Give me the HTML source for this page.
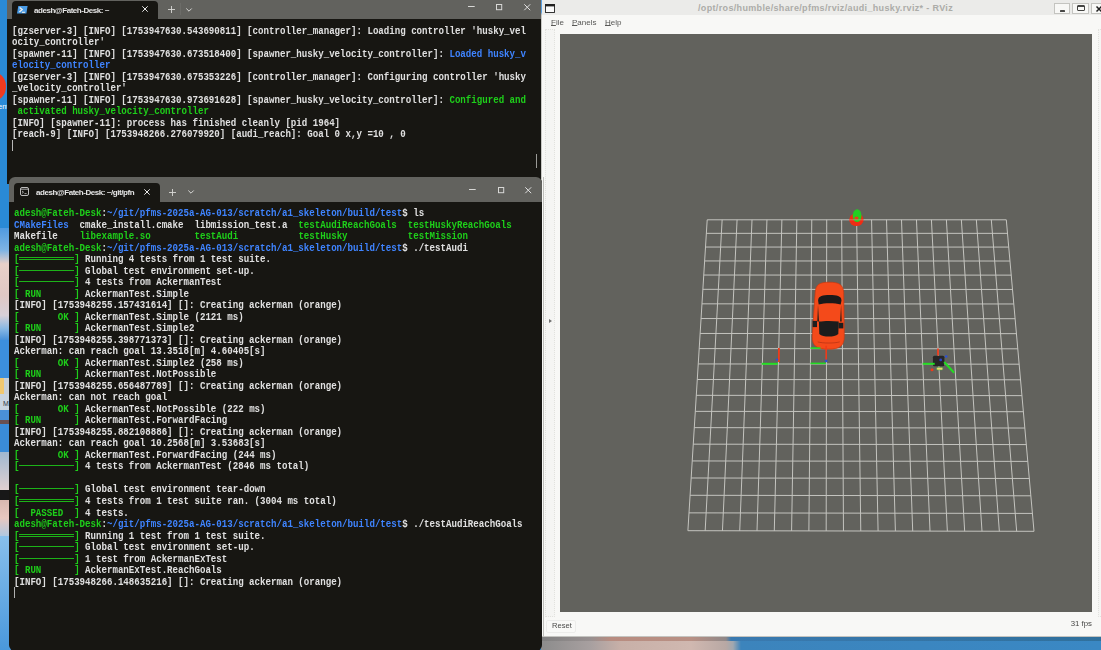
<!DOCTYPE html>
<html><head><meta charset="utf-8">
<style>
*{margin:0;padding:0;box-sizing:border-box}
html,body{width:1101px;height:650px;overflow:hidden;background:#2a8ad6;position:relative;font-family:"Liberation Sans",sans-serif}
.abs{position:absolute}
.tl{position:absolute;white-space:pre;font-weight:bold;font-family:"Liberation Mono",monospace;font-size:9.13px;letter-spacing:-0.008px;line-height:11.52px;color:#e0e0e0;height:11.52px;transform:scaleY(1.17);transform-origin:0 8.2px;will-change:transform}
.term{position:absolute;background:#171612;overflow:hidden}
.tabbar{position:absolute;left:0;top:0;right:0;background:#62625e}
.tab{position:absolute;background:#171612;border-radius:4px 4px 0 0}
.ttl{position:absolute;color:#e6e6e6;font-size:8px;font-weight:bold;letter-spacing:-0.45px;line-height:10px;white-space:pre;will-change:transform}
svg.ic{position:absolute;overflow:visible}
.dl,.el{display:inline-block;width:54.7px;height:11.52px;vertical-align:top;margin-right:-0.008px}
.dl{background:linear-gradient(to bottom,transparent 4.55px,rgba(30,207,26,.85) 4.55px,rgba(30,207,26,.85) 5.5px,transparent 5.5px)}
.el{background:linear-gradient(to bottom,transparent 3.6px,rgba(30,207,26,.85) 3.6px,rgba(30,207,26,.85) 4.5px,transparent 4.5px,transparent 5.4px,rgba(30,207,26,.85) 5.4px,rgba(30,207,26,.85) 6.3px,transparent 6.3px)}
.menu{position:absolute;top:16.5px;font-size:8px;line-height:12px;color:#585856;will-change:transform}
.menu u{text-decoration-thickness:0.8px;text-underline-offset:0.2px}
</style></head><body>
<!-- desktop left strip -->
<div class="abs" style="left:0;top:0;width:12px;height:650px;background:#2a8ad6"></div>
<div class="abs" style="left:0;top:228px;width:12px;height:112px;background:linear-gradient(#4f9ae0 0%,#7fb4e4 20%,#e8d0c8 32%,#e0c8c4 60%,#d8d0d8 78%,#88b8e4 90%,#4890d8 100%)"></div>
<div class="abs" style="left:0;top:340px;width:12px;height:38px;background:#3c8fdc"></div>
<div class="abs" style="left:0;top:378px;width:4px;height:16px;background:#f0c870"></div>
<div class="abs" style="left:4px;top:378px;width:8px;height:16px;background:#c8d0d8"></div>
<div class="abs" style="left:0;top:394px;width:12px;height:16px;background:#c8d4e0"></div>
<div class="abs" style="left:3px;top:400px;font-size:7px;line-height:8px;color:#303848">M</div>
<div class="abs" style="left:0;top:410px;width:12px;height:10px;background:#4a90d8"></div>
<div class="abs" style="left:0;top:420px;width:12px;height:4px;background:#6a5050"></div>
<div class="abs" style="left:0;top:424px;width:12px;height:28px;background:#3a8cd8"></div>
<div class="abs" style="left:0;top:452px;width:12px;height:38px;background:linear-gradient(#a0b8d0,#e0d0d0)"></div>
<div class="abs" style="left:0;top:490px;width:12px;height:10px;background:#181818"></div>
<div class="abs" style="left:0;top:500px;width:12px;height:36px;background:linear-gradient(#d8b8b0,#e8c8c0 50%,#b0c8e0)"></div>
<div class="abs" style="left:0;top:536px;width:12px;height:114px;background:linear-gradient(#88c0ec,#4a98dc)"></div>
<div class="abs" style="left:-15px;top:73px;width:21px;height:26.5px;border-radius:50%;background:#f03a20"></div>
<div class="abs" style="left:-2px;top:103px;font-size:7.5px;line-height:8px;color:#ffffff;white-space:pre">ent</div>

<!-- desktop bottom strip -->
<div class="abs" style="left:541px;top:636px;width:560px;height:14px;background:linear-gradient(90deg,#8c8c8c 0px,#a8a0a0 50px,#c8b0a8 80px,#d0b8b0 150px,#b8a8a4 185px,#a0a8b0 192px,#3c84bc 200px,#3a88c4 560px)"></div>
<div class="abs" style="left:541px;top:637px;width:560px;height:4px;background:linear-gradient(90deg,#808080 0px,#989090 50px,#b88c80 70px,#b89084 150px,#908888 185px,#3a7ab0 190px,#30709c 560px)"></div>

<!-- TERMINAL 1 -->
<div class="term" style="left:7.2px;top:0;width:533.7px;height:184px">
  <div class="tabbar" style="height:18.7px"></div>
  <div class="tab" style="left:5.3px;top:1px;width:145.2px;height:17.7px"></div>
</div>
<svg class="ic" style="left:17.3px;top:5.8px" width="11" height="8" viewBox="0 0 11 8">
  <path d="M1.3 0 H10.6 L9.4 7.5 H0 Z" fill="#4a9ce6"/>
  <path d="M2.6 1.5 L5.2 3.6 L2.4 6.1" stroke="#f4f0e8" stroke-width="1.3" fill="none"/>
  <path d="M5 6.3 H7.9" stroke="#f4f0e8" stroke-width="1.1"/>
</svg>
<div class="ttl" style="left:33.6px;top:5.5px">adesh@Fateh-Desk: ~</div>
<svg class="ic" style="left:142px;top:6.4px" width="6" height="6"><path d="M0.3 0.3 L5.7 5.7 M5.7 0.3 L0.3 5.7" stroke="#e8e8e8" stroke-width="1"/></svg>
<svg class="ic" style="left:167.6px;top:6px" width="7" height="7"><path d="M3.5 0 V7 M0 3.5 H7" stroke="#d8d8d6" stroke-width="0.9"/></svg>
<div class="abs" style="left:180.2px;top:3px;width:1px;height:12px;background:#6c6c68"></div>
<svg class="ic" style="left:186px;top:7.6px" width="6" height="4"><path d="M0.3 0.5 L3 3.2 L5.7 0.5" stroke="#d8d8d6" stroke-width="1" fill="none"/></svg>
<svg class="ic" style="left:467.5px;top:6.4px" width="7" height="2"><path d="M0 0.5 H6.7" stroke="#d8d8d6" stroke-width="1"/></svg>
<svg class="ic" style="left:496px;top:4.4px" width="6.2" height="6"><rect x="0.5" y="0.5" width="5.2" height="5.2" stroke="#d8d8d6" stroke-width="1" fill="none"/></svg>
<svg class="ic" style="left:523.6px;top:4px" width="6.5" height="6.5"><path d="M0.3 0.3 L6.2 6.2 M6.2 0.3 L0.3 6.2" stroke="#e0e0e0" stroke-width="1"/></svg>
<div class="abs" style="left:536.3px;top:153.5px;width:1.2px;height:14px;background:#9a9a96"></div>
<div class="abs" style="left:11.9px;top:140px;width:1.1px;height:11.4px;background:#b8b8b8"></div>
<div class="tl" style="left:11.90px;top:25.70px">[gzserver-3] [INFO] [1753947630.543690811] [controller_manager]: Loading controller &#x27;husky_vel</div>
<div class="tl" style="left:11.90px;top:37.22px">ocity_controller&#x27;</div>
<div class="tl" style="left:11.90px;top:48.74px">[spawner-11] [INFO] [1753947630.673518400] [spawner_husky_velocity_controller]: <span style="color:#3f84ff">Loaded husky_v</span></div>
<div class="tl" style="left:11.90px;top:60.26px"><span style="color:#3f84ff">elocity_controller</span></div>
<div class="tl" style="left:11.90px;top:71.78px">[gzserver-3] [INFO] [1753947630.675353226] [controller_manager]: Configuring controller &#x27;husky</div>
<div class="tl" style="left:11.90px;top:83.30px">_velocity_controller&#x27;</div>
<div class="tl" style="left:11.90px;top:94.82px">[spawner-11] [INFO] [1753947630.973691628] [spawner_husky_velocity_controller]: <span style="color:#1ecf1a">Configured and</span></div>
<div class="tl" style="left:11.90px;top:106.34px"><span style="color:#1ecf1a"> activated husky_velocity_controller</span></div>
<div class="tl" style="left:11.90px;top:117.86px">[INFO] [spawner-11]: process has finished cleanly [pid 1964]</div>
<div class="tl" style="left:11.90px;top:129.38px">[reach-9] [INFO] [1753948266.276079920] [audi_reach]: Goal 0 x,y =10 , 0</div>

<!-- RVIZ -->
<div class="abs" style="left:541px;top:0;width:560px;height:637px;background:#f8f8f6;border-bottom:1.5px solid #c4c4c0">
  <div class="abs" style="left:0;top:0;width:560px;height:15.3px;background:#ebebe9"></div>
</div>
<svg class="ic" style="left:545px;top:4px" width="10" height="9" viewBox="0 0 10 9">
  <rect x="0.5" y="0.5" width="9" height="8" stroke="#202020" stroke-width="0.9" fill="#fafafa"/>
  <rect x="0" y="0" width="10" height="2.4" fill="#202020"/>
</svg>
<div class="abs" style="left:541px;top:2px;width:560px;text-align:center;font-size:9px;line-height:12px;font-weight:bold;letter-spacing:0.345px;color:#acaca8;white-space:pre"><span style="position:relative;left:4.5px">/opt/ros/humble/share/pfms/rviz/audi_husky.rviz* - RViz</span></div>
<div class="abs" style="left:1054.2px;top:3.3px;width:16px;height:10.3px;border:1px solid #c4c4c0;background:#f8f8f6"></div>
<div class="abs" style="left:1059.8px;top:9.9px;width:5px;height:1.8px;border-radius:0.6px;background:#484846"></div>
<div class="abs" style="left:1072.2px;top:3.3px;width:16.5px;height:10.3px;border:1px solid #c4c4c0;background:#f8f8f6"></div>
<div class="abs" style="left:1076.5px;top:5.1px;width:8px;height:6.4px;border:1px solid #444442;border-radius:1px;box-shadow:inset 0 1px 0 #444442"></div>
<div class="abs" style="left:1090.6px;top:3.3px;width:14px;height:10.3px;border:1px solid #c4c4c0;background:#f8f8f6"></div>
<svg class="ic" style="left:1096px;top:6px" width="6" height="6"><path d="M0.5 0.5 L5.5 5.5 M5.5 0.5 L0.5 5.5" stroke="#202020" stroke-width="1.5"/></svg>

<div class="menu" style="left:551.2px"><u>F</u>ile</div>
<div class="menu" style="left:572.4px"><u>P</u>anels</div>
<div class="menu" style="left:604.8px"><u>H</u>elp</div>

<div class="abs" style="left:545.3px;top:28.5px;width:9.3px;height:588px;border:1px dotted #e2e2de;background:#f5f5f3"></div>
<div class="abs" style="left:549px;top:319px;width:0;height:0;border-left:3px solid #707070;border-top:2.5px solid transparent;border-bottom:2.5px solid transparent"></div>
<div class="abs" style="left:1097.8px;top:28.5px;width:9px;height:588px;border:1px dotted #e2e2de;background:#f5f5f3"></div>
<div class="abs" style="left:541px;top:0;width:1px;height:637px;background:linear-gradient(#5aa0e0 0,#5aa0e0 12px,#c8c8c4 15px)"></div>
<div class="abs" style="left:542.5px;top:177px;width:1px;height:460px;background:#c0c0bc"></div>

<div class="abs" style="left:546.3px;top:619.5px;width:30px;height:13px;border:1px solid #ececea;border-radius:2px;background:#f9f9f7"></div>
<div class="abs" style="left:551.8px;top:621.3px;font-size:7.6px;line-height:10px;color:#4a4a48;will-change:transform">Reset</div>
<div class="abs" style="left:1000px;top:618px;width:92px;text-align:right;font-size:7.8px;line-height:12px;color:#484846;will-change:transform">31 fps</div>

<div class="abs" style="left:560.3px;top:33.6px;width:531.6px;height:578px;background:#62625d;overflow:hidden">
 <svg width="532" height="578" viewBox="560.3 33.6 532 578" style="position:absolute;left:0;top:0">
  <g stroke="#c4c4bf" stroke-width="1" fill="none">
<line x1="707.50" y1="219.40" x2="688.20" y2="530.30"/>
<line x1="707.50" y1="219.40" x2="1006.60" y2="219.40"/>
<line x1="722.43" y1="219.40" x2="705.47" y2="530.33"/>
<line x1="706.66" y1="232.93" x2="1007.80" y2="232.95"/>
<line x1="737.37" y1="219.40" x2="722.75" y2="530.36"/>
<line x1="705.81" y1="246.64" x2="1009.03" y2="246.69"/>
<line x1="752.30" y1="219.40" x2="740.03" y2="530.39"/>
<line x1="704.95" y1="260.55" x2="1010.27" y2="260.62"/>
<line x1="767.24" y1="219.40" x2="757.31" y2="530.42"/>
<line x1="704.07" y1="274.64" x2="1011.52" y2="274.74"/>
<line x1="782.18" y1="219.40" x2="774.60" y2="530.45"/>
<line x1="703.18" y1="288.94" x2="1012.79" y2="289.06"/>
<line x1="797.13" y1="219.40" x2="791.89" y2="530.48"/>
<line x1="702.28" y1="303.44" x2="1014.09" y2="303.58"/>
<line x1="812.07" y1="219.40" x2="809.18" y2="530.51"/>
<line x1="701.37" y1="318.14" x2="1015.40" y2="318.31"/>
<line x1="827.02" y1="219.40" x2="826.48" y2="530.54"/>
<line x1="700.44" y1="333.06" x2="1016.72" y2="333.26"/>
<line x1="841.97" y1="219.40" x2="843.78" y2="530.57"/>
<line x1="699.51" y1="348.19" x2="1018.07" y2="348.42"/>
<line x1="856.93" y1="219.40" x2="861.08" y2="530.60"/>
<line x1="698.55" y1="363.54" x2="1019.44" y2="363.80"/>
<line x1="871.88" y1="219.40" x2="878.39" y2="530.63"/>
<line x1="697.59" y1="379.11" x2="1020.83" y2="379.40"/>
<line x1="886.84" y1="219.40" x2="895.70" y2="530.66"/>
<line x1="696.60" y1="394.92" x2="1022.24" y2="395.24"/>
<line x1="901.80" y1="219.40" x2="913.01" y2="530.69"/>
<line x1="695.61" y1="410.96" x2="1023.67" y2="411.31"/>
<line x1="916.77" y1="219.40" x2="930.33" y2="530.72"/>
<line x1="694.60" y1="427.24" x2="1025.12" y2="427.63"/>
<line x1="931.73" y1="219.40" x2="947.65" y2="530.75"/>
<line x1="693.57" y1="443.77" x2="1026.59" y2="444.19"/>
<line x1="946.70" y1="219.40" x2="964.97" y2="530.78"/>
<line x1="692.53" y1="460.55" x2="1028.08" y2="461.00"/>
<line x1="961.67" y1="219.40" x2="982.30" y2="530.81"/>
<line x1="691.47" y1="477.59" x2="1029.60" y2="478.07"/>
<line x1="976.65" y1="219.40" x2="999.63" y2="530.84"/>
<line x1="690.40" y1="494.89" x2="1031.14" y2="495.41"/>
<line x1="991.62" y1="219.40" x2="1016.96" y2="530.87"/>
<line x1="689.31" y1="512.46" x2="1032.71" y2="513.02"/>
<line x1="1006.60" y1="219.40" x2="1034.30" y2="530.90"/>
<line x1="688.20" y1="530.30" x2="1034.30" y2="530.90"/>
  </g>
  <!-- goal marker -->
  <ellipse cx="856.7" cy="219.3" rx="7.2" ry="6.4" fill="#ee2c14"/>
  <ellipse cx="857.4" cy="215.3" rx="4.4" ry="6.4" fill="#22d022"/>
  <ellipse cx="856.8" cy="217.7" rx="2.1" ry="1.7" fill="#e8401c"/>
  <path d="M849.5 219.4 H864" stroke="#c8c0b8" stroke-width="1" opacity="0.45"/>
  <!-- car -->
  <path d="M815.5 292 C816 284 820 281.8 829.5 281.8 C839 281.8 843.5 284 844 292 L844.6 336 C844.6 345.5 840 348.8 828.5 348.8 C817 348.8 812.5 345.5 812.5 336 Z" fill="#f44a1a" stroke="#c83810" stroke-width="0.7"/>
  <path d="M818.4 300 C818.8 295.5 823 294.7 830 294.7 C837 294.7 841.6 295.5 841.8 300 L841 304.2 C835 302.5 825 302.5 819 304.2 Z" fill="#1c1a1a"/>
  <path d="M818.3 304.5 L819.3 321 L817.6 321 Z M841.4 304.5 L840.4 321 L842 321 Z" fill="#2a1e18"/>
  <path d="M819.2 321.2 C825 320.3 833 320.3 839 321.2 L838.6 333.5 C834.5 337 823.5 337 819.6 333.5 Z" fill="#1c1c1c"/>
  <path d="M813 320.5 L817.3 320.5 L817.3 326.7 L813 326.7 Z" fill="#1e1e1e"/>
  <path d="M838.8 322.4 L843.6 322.4 L843.6 328 L838.8 328 Z" fill="#1e1e1e"/>
  <path d="M818 341.5 C823 343 835 343 840 341.5" stroke="#a82c10" stroke-width="0.6" fill="none"/>
  <!-- car axes -->
  <path d="M810.8 347.7 H820.8" stroke="#22dd22" stroke-width="1.6"/>
  <path d="M826.5 345.4 V360.2" stroke="#ee3a1a" stroke-width="1.6"/>
  <path d="M810.8 363 H826" stroke="#22dd22" stroke-width="1.6"/>
  <circle cx="826.5" cy="360.5" r="1.3" fill="#2a50d8"/>
  <!-- origin axes -->
  <path d="M762 363.4 H778.2" stroke="#22dd22" stroke-width="2"/>
  <path d="M779.2 347.5 V361.5" stroke="#ee3a1a" stroke-width="1.8"/>
  <circle cx="777.3" cy="359.2" r="1.2" fill="#2a50d8"/>
  <!-- husky -->
  <rect x="933.2" y="355.4" width="11.5" height="10.5" rx="1.5" fill="#262626"/>
  <path d="M923 363.4 H935" stroke="#22dd22" stroke-width="2"/>
  <path d="M944.5 361.6 L954.4 372.4" stroke="#22dd22" stroke-width="2"/>
  <path d="M938.3 348.2 V355" stroke="#ee3a1a" stroke-width="1.8"/>
  <circle cx="932.3" cy="369.4" r="1.5" fill="#ee3a1a"/>
  <circle cx="946.5" cy="356.1" r="1.3" fill="#2a50d8"/>
  <circle cx="941" cy="359.5" r="1.4" fill="#2a40c8"/>
  <rect x="937" y="367" width="6" height="2.5" rx="1" fill="#f0d070" stroke="#40c040" stroke-width="0.5"/>

 </svg>
</div>
<!-- TERMINAL 2 -->
<div class="term" style="left:9.1px;top:177px;width:533.4px;height:474px;border-radius:6px">
  <div class="tabbar" style="height:24.7px"></div>
  <div class="tab" style="left:5.4px;top:5.8px;width:145.2px;height:18.9px"></div>
</div>
<svg class="ic" style="left:20px;top:187.2px" width="9" height="9" viewBox="0 0 9 9">
  <rect x="0.5" y="0.5" width="8" height="8" rx="1.5" stroke="#d0d0d0" stroke-width="0.9" fill="none"/>
  <path d="M1 2.2 H8" stroke="#d0d0d0" stroke-width="0.8"/>
  <path d="M2 4 L3.5 5.2 L2 6.4 M4.5 6.6 H6.6" stroke="#c8c8c8" stroke-width="0.8" fill="none"/>
</svg>
<div class="ttl" style="left:35.5px;top:188.3px">adesh@Fateh-Desk: ~/git/pfn</div>
<svg class="ic" style="left:144px;top:189px" width="6" height="6"><path d="M0.3 0.3 L5.7 5.7 M5.7 0.3 L0.3 5.7" stroke="#e8e8e8" stroke-width="1"/></svg>
<svg class="ic" style="left:169.4px;top:188.5px" width="7" height="7"><path d="M3.5 0 V7 M0 3.5 H7" stroke="#d8d8d6" stroke-width="0.9"/></svg>
<svg class="ic" style="left:187.6px;top:190px" width="6" height="4"><path d="M0.3 0.5 L3 3.2 L5.7 0.5" stroke="#d8d8d6" stroke-width="1" fill="none"/></svg>
<svg class="ic" style="left:469.4px;top:189.2px" width="7" height="2"><path d="M0 0.5 H6.7" stroke="#d8d8d6" stroke-width="1"/></svg>
<svg class="ic" style="left:497.5px;top:186.8px" width="6.2" height="6"><rect x="0.5" y="0.5" width="5.2" height="5.2" stroke="#d8d8d6" stroke-width="1" fill="none"/></svg>
<svg class="ic" style="left:525.2px;top:186.5px" width="6.5" height="6.5"><path d="M0.3 0.3 L6.2 6.2 M6.2 0.3 L0.3 6.2" stroke="#e0e0e0" stroke-width="1"/></svg>
<div class="abs" style="left:13.5px;top:587px;width:1px;height:11px;background:#b0b0b0"></div>
<div class="tl" style="left:14.10px;top:208.00px"><span style="color:#1ecf1a">adesh@Fateh-Desk</span>:<span style="color:#3f84ff">~/git/pfms-2025a-AG-013/scratch/a1_skeleton/build/test</span>$ ls</div>
<div class="tl" style="left:14.10px;top:219.52px"><span style="color:#3f84ff">CMakeFiles</span>  cmake_install.cmake  libmission_test.a  <span style="color:#1ecf1a">testAudiReachGoals</span>  <span style="color:#1ecf1a">testHuskyReachGoals</span></div>
<div class="tl" style="left:14.10px;top:231.04px">Makefile    <span style="color:#1ecf1a">libexample.so</span>        <span style="color:#1ecf1a">testAudi</span>           <span style="color:#1ecf1a">testHusky</span>           <span style="color:#1ecf1a">testMission</span></div>
<div class="tl" style="left:14.10px;top:242.56px"><span style="color:#1ecf1a">adesh@Fateh-Desk</span>:<span style="color:#3f84ff">~/git/pfms-2025a-AG-013/scratch/a1_skeleton/build/test</span>$ ./testAudi</div>
<div class="tl" style="left:14.10px;top:254.08px"><span style="color:#1ecf1a">[<span class="el"></span>]</span> Running 4 tests from 1 test suite.</div>
<div class="tl" style="left:14.10px;top:265.60px"><span style="color:#1ecf1a">[<span class="dl"></span>]</span> Global test environment set-up.</div>
<div class="tl" style="left:14.10px;top:277.12px"><span style="color:#1ecf1a">[<span class="dl"></span>]</span> 4 tests from AckermanTest</div>
<div class="tl" style="left:14.10px;top:288.64px"><span style="color:#1ecf1a">[ RUN      ]</span> AckermanTest.Simple</div>
<div class="tl" style="left:14.10px;top:300.16px">[INFO] [1753948255.157431614] []: Creating ackerman (orange)</div>
<div class="tl" style="left:14.10px;top:311.68px"><span style="color:#1ecf1a">[       OK ]</span> AckermanTest.Simple (2121 ms)</div>
<div class="tl" style="left:14.10px;top:323.20px"><span style="color:#1ecf1a">[ RUN      ]</span> AckermanTest.Simple2</div>
<div class="tl" style="left:14.10px;top:334.72px">[INFO] [1753948255.398771373] []: Creating ackerman (orange)</div>
<div class="tl" style="left:14.10px;top:346.24px">Ackerman: can reach goal 13.3518[m] 4.60405[s]</div>
<div class="tl" style="left:14.10px;top:357.76px"><span style="color:#1ecf1a">[       OK ]</span> AckermanTest.Simple2 (258 ms)</div>
<div class="tl" style="left:14.10px;top:369.28px"><span style="color:#1ecf1a">[ RUN      ]</span> AckermanTest.NotPossible</div>
<div class="tl" style="left:14.10px;top:380.80px">[INFO] [1753948255.656487789] []: Creating ackerman (orange)</div>
<div class="tl" style="left:14.10px;top:392.32px">Ackerman: can not reach goal</div>
<div class="tl" style="left:14.10px;top:403.84px"><span style="color:#1ecf1a">[       OK ]</span> AckermanTest.NotPossible (222 ms)</div>
<div class="tl" style="left:14.10px;top:415.36px"><span style="color:#1ecf1a">[ RUN      ]</span> AckermanTest.ForwardFacing</div>
<div class="tl" style="left:14.10px;top:426.88px">[INFO] [1753948255.882108886] []: Creating ackerman (orange)</div>
<div class="tl" style="left:14.10px;top:438.40px">Ackerman: can reach goal 10.2568[m] 3.53683[s]</div>
<div class="tl" style="left:14.10px;top:449.92px"><span style="color:#1ecf1a">[       OK ]</span> AckermanTest.ForwardFacing (244 ms)</div>
<div class="tl" style="left:14.10px;top:461.44px"><span style="color:#1ecf1a">[<span class="dl"></span>]</span> 4 tests from AckermanTest (2846 ms total)</div>
<div class="tl" style="left:14.10px;top:472.96px"></div>
<div class="tl" style="left:14.10px;top:484.48px"><span style="color:#1ecf1a">[<span class="dl"></span>]</span> Global test environment tear-down</div>
<div class="tl" style="left:14.10px;top:496.00px"><span style="color:#1ecf1a">[<span class="el"></span>]</span> 4 tests from 1 test suite ran. (3004 ms total)</div>
<div class="tl" style="left:14.10px;top:507.52px"><span style="color:#1ecf1a">[  PASSED  ]</span> 4 tests.</div>
<div class="tl" style="left:14.10px;top:519.04px"><span style="color:#1ecf1a">adesh@Fateh-Desk</span>:<span style="color:#3f84ff">~/git/pfms-2025a-AG-013/scratch/a1_skeleton/build/test</span>$ ./testAudiReachGoals</div>
<div class="tl" style="left:14.10px;top:530.56px"><span style="color:#1ecf1a">[<span class="el"></span>]</span> Running 1 test from 1 test suite.</div>
<div class="tl" style="left:14.10px;top:542.08px"><span style="color:#1ecf1a">[<span class="dl"></span>]</span> Global test environment set-up.</div>
<div class="tl" style="left:14.10px;top:553.60px"><span style="color:#1ecf1a">[<span class="dl"></span>]</span> 1 test from AckermanExTest</div>
<div class="tl" style="left:14.10px;top:565.12px"><span style="color:#1ecf1a">[ RUN      ]</span> AckermanExTest.ReachGoals</div>
<div class="tl" style="left:14.10px;top:576.64px">[INFO] [1753948266.148635216] []: Creating ackerman (orange)</div>

</body></html>
